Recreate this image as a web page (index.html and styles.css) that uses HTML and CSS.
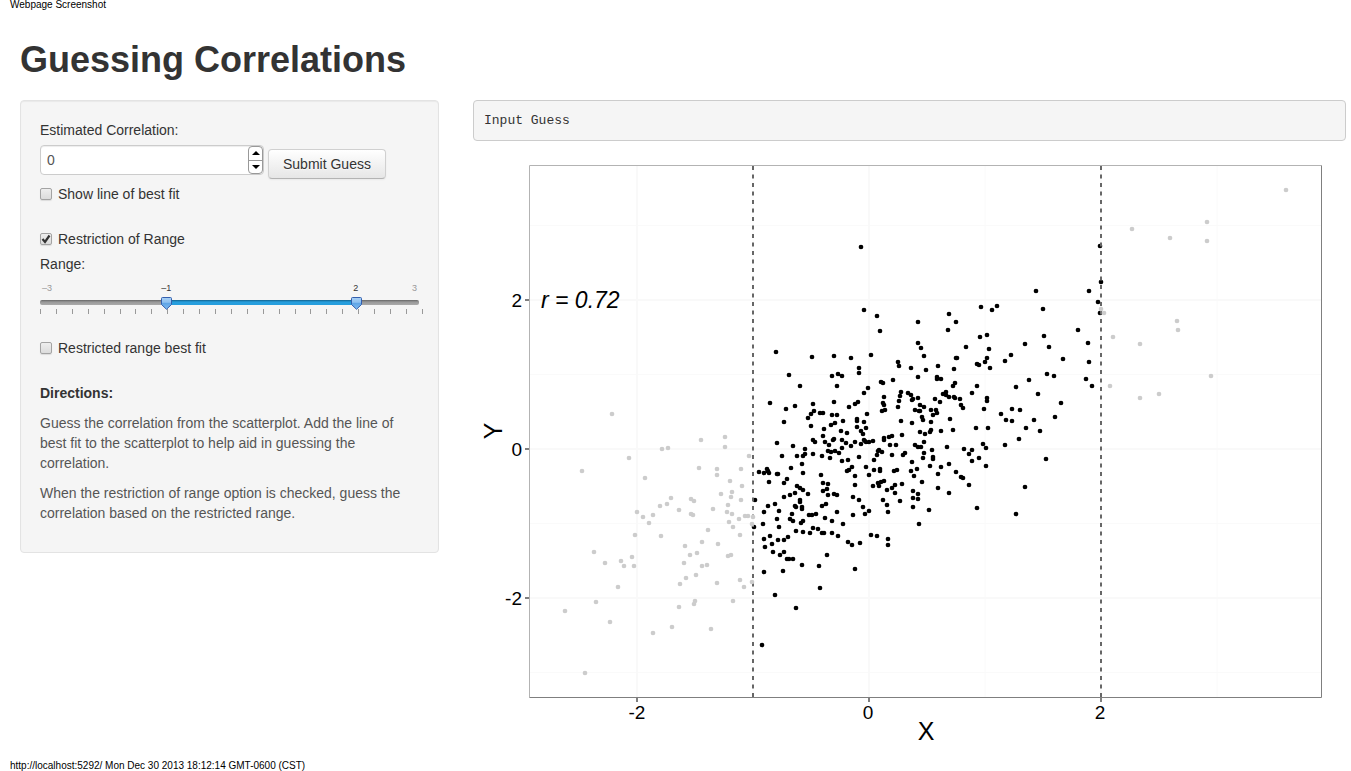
FILE: index.html
```html
<!DOCTYPE html>
<html lang="en">

<head>
  <meta charset="UTF-8">
  <meta name="viewport" content="width=device-width, initial-scale=1.0">
  <title>Guessing Correlations</title>
  <link rel="stylesheet" href="styles.css">
</head>

<body>
  <div class="print-header">Webpage Screenshot</div>

  <div class="container">
    <h1>Guessing Correlations</h1>
    <div class="row">
      <form class="well">
        <label class="field-label" for="guess">Estimated Correlation:</label>
        <div class="guess-row">
          <div class="number">
            <input type="number" id="guess" value="0" min="-1" max="1" step="0.01">
            <div class="spinner">
              <button type="button" id="up" aria-label="Increase"><i class="arrow up"></i></button>
              <button type="button" id="down" aria-label="Decrease"><i class="arrow down"></i></button>
            </div>
          </div>
          <button type="button" class="btn">Submit Guess</button>
        </div>
        <label class="checkbox"><input type="checkbox"> Show line of best fit</label>
        <label class="checkbox spaced"><input type="checkbox" checked> Restriction of Range</label>
        <label class="field-label" for="low">Range:</label>
        <div class="slider">
          <div class="scale">
            <span class="end">–3</span>
            <span class="end">3</span>
            <span class="value" id="lowText">–1</span>
            <span class="value" id="highText">2</span>
          </div>
          <div class="track">
            <div class="fill" id="fill"></div>
            <input type="range" id="low" min="-3" max="3" step="0.25" value="-1" aria-label="Range minimum">
            <input type="range" id="high" min="-3" max="3" step="0.25" value="2" aria-label="Range maximum">
          </div>
          <div class="ticks" id="ticks"></div>
        </div>
        <label class="checkbox"><input type="checkbox"> Restricted range best fit</label>
        <div class="help">
          <p><strong>Directions:</strong></p>
          <p>Guess the correlation from the scatterplot. Add the line of best fit to the scatterplot to help aid in guessing the correlation.</p>
          <p>When the restriction of range option is checked, guess the correlation based on the restricted range.</p>
        </div>
      </form>

      <div class="main">
        <pre>Input Guess</pre>
        <svg class="plot" viewBox="473 151 873 600" role="img" aria-label="Scatterplot of Y against X">
          <g class="grid-minor">
            <path d="M530 225.500H1321M530 374.500H1321M530 523.500H1321M530 672.500H1321M753 166V697M985 166V697M1217 166V697" />
          </g>
          <g class="grid-major">
            <path d="M530 300H1321M530 449H1321M530 598H1321M637 166V697M869 166V697M1101 166V697" />
          </g>
          <path class="dots inside" id="inside" />
          <path class="limit" d="M753 166V697M1101 166V697" />
          <path class="dots outside" id="outside" />
          <path class="frame light" d="M529.500 697.500V165.500H1321.500" />
          <path class="frame" d="M529.500 697.500H1321.500V165.500" />
          <path class="axis-ticks" d="M525 300H529M525 449H529M525 598H529M637 698V702M869 698V702M1101 698V702" />
          <g class="axis-text">
            <text x="522" y="307" text-anchor="end">2</text>
            <text x="522" y="456" text-anchor="end">0</text>
            <text x="522" y="605" text-anchor="end">-2</text>
            <text x="637" y="719" text-anchor="middle">-2</text>
            <text x="868" y="719" text-anchor="middle">0</text>
            <text x="1100" y="719" text-anchor="middle">2</text>
          </g>
          <g class="axis-title">
            <text x="926" y="740" text-anchor="middle">X</text>
            <text transform="translate(502 431) rotate(-90)" text-anchor="middle">Y</text>
          </g>
          <text class="r-value" x="541" y="308">r = 0.72</text>
        </svg>
      </div>
    </div>
  </div>

  <div class="print-footer">http://localhost:5292/ Mon Dec 30 2013 18:12:14 GMT-0600 (CST)</div>
  <script src="script.js"></script>
</body>

</html>
```
FILE: styles.css
```css
* {
  box-sizing: border-box;
}

body {
  margin: 0;
  background: #fff;
  color: #333;
  font-family: "Liberation Sans", Arial, sans-serif;
  font-size: 14px;
  line-height: 20px;
}

.print-header,
.print-footer {
  padding: 0 10px;
  color: #000;
  font-size: 10px;
  line-height: 10px;
}

.print-footer {
  padding-top: 10px;
}

.container {
  padding: 0 5px 0 20px;
}

h1 {
  margin: 30px 0 20px;
  font-size: 36px;
  line-height: 40px;
}

.row {
  display: grid;
  grid-template-columns: 419fr 873fr;
  gap: 34px;
  align-items: start;
}

/* sidebar */
.well {
  padding: 19px;
  border: 1px solid #e3e3e3;
  border-radius: 4px;
  background: #f5f5f5;
  box-shadow: inset 0 1px 1px rgba(0, 0, 0, 0.05);
}

.field-label {
  display: block;
}

.guess-row {
  display: flex;
  align-items: flex-start;
  gap: 4px;
  margin: 5px 0;
}

.number {
  display: flex;
  width: 224px;
  height: 30px;
  border: 1px solid #ccc;
  border-radius: 4px;
  background: #fff;
  box-shadow: inset 0 1px 1px rgba(0, 0, 0, 0.075);
}

.number input {
  flex: 1;
  min-width: 0;
  padding: 4px 6px;
  border: none;
  outline: none;
  background: none;
  color: #555;
  font: inherit;
  appearance: textfield;
}

.number input::-webkit-inner-spin-button {
  appearance: none;
}

.spinner {
  display: flex;
  flex-direction: column;
  width: 15px;
  border: 1px solid #999;
  border-radius: 4px;
}

.spinner button {
  display: flex;
  flex: 1;
  align-items: center;
  justify-content: center;
  padding: 0;
  border: none;
  background: none;
}

.spinner button + button {
  border-top: 1px solid #999;
}

.arrow {
  border: 4px solid transparent;
}

.arrow.up {
  border-top: none;
  border-bottom-color: #000;
}

.arrow.down {
  border-bottom: none;
  border-top-color: #000;
}

.btn {
  height: 30px;
  margin-top: 4px;
  padding: 4px 14px;
  border: 1px solid #ccc;
  border-color: #d0d0d0 #d0d0d0 #b3b3b3;
  border-radius: 4px;
  background: linear-gradient(#fff, #e6e6e6);
  box-shadow: 0 1px 2px rgba(0, 0, 0, 0.05);
  color: #333;
  font: inherit;
  text-shadow: 0 1px 1px rgba(255, 255, 255, 0.75);
}

.checkbox {
  display: flex;
  align-items: center;
  gap: 6px;
}

.checkbox.spaced {
  margin: 25px 0 5px;
}

.checkbox input {
  width: 12px;
  height: 12px;
  margin: 0;
  border: 1px solid #a3a3a3;
  border-radius: 2px;
  background: linear-gradient(#eee, #dcdcdc);
  box-shadow: 0 1px 1px rgba(0, 0, 0, 0.1);
  appearance: none;
}

.checkbox input:checked {
  background: url("data:image/svg+xml,%3Csvg xmlns='http://www.w3.org/2000/svg' viewBox='0 0 10 10'%3E%3Cpath d='M1.500 5L4 8L8.500 1.500' fill='none' stroke='%23333' stroke-width='2.200'/%3E%3C/svg%3E") center / 10px, linear-gradient(#eee, #dcdcdc);
}

/* range slider */
.slider {
  height: 64px;
  padding-top: 8px;
}

.scale {
  position: relative;
  display: flex;
  justify-content: space-between;
  height: 12px;
  padding: 0 2px;
  font-size: 9px;
  line-height: 12px;
}

.scale .end {
  color: #999;
}

.scale .value {
  position: absolute;
  transform: translateX(-50%);
}

.track {
  position: relative;
  height: 5px;
  margin-top: 6px;
  border-radius: 2px;
  background: linear-gradient(#666, #999 40%, #aaa);
}

.fill {
  position: absolute;
  height: 5px;
  background: linear-gradient(#11618d, #269edd 40%, #269edd);
}

.track input {
  position: absolute;
  top: -3px;
  left: -5px;
  width: calc(100% + 11px);
  height: 13px;
  margin: 0;
  background: none;
  pointer-events: none;
  appearance: none;
}

.track input::-webkit-slider-thumb {
  width: 11px;
  height: 13px;
  background: url("data:image/svg+xml,%3Csvg xmlns='http://www.w3.org/2000/svg' viewBox='0 0 11 13'%3E%3ClinearGradient id='g' x2='0' y2='1'%3E%3Cstop stop-color='%23a9d0f5'/%3E%3Cstop offset='.4' stop-color='%238fc1f0'/%3E%3Cstop offset='.5' stop-color='%2360a5e6'/%3E%3Cstop offset='1' stop-color='%2380bbf0'/%3E%3C/linearGradient%3E%3Cpath d='M.5 1.500Q.5.5 1.500.5H9.500Q10.500.5 10.500 1.500V7.500L5.500 12.300L.5 7.500Z' fill='url(%23g)' stroke='%23345fae'/%3E%3C/svg%3E") no-repeat;
  pointer-events: auto;
  appearance: none;
}

.ticks {
  display: flex;
  justify-content: space-between;
  margin: 4px -4px 0 0;
}

.ticks i {
  width: 1px;
  height: 5px;
  background: #999;
}

.help {
  margin-top: 25px;
  color: #555;
}

.help p {
  margin: 0 0 10px;
}

.help strong {
  color: #333;
}

/* output */
pre {
  margin: 0 0 10px;
  padding: 10px 10px 9px;
  border: 1px solid #ccc;
  border-radius: 4px;
  background: #f5f5f5;
  color: #333;
  font-family: "Liberation Mono", "Courier New", monospace;
  font-size: 13px;
  line-height: 20px;
}

.plot {
  display: block;
  width: 100%;
  height: auto;
}

.plot path {
  fill: none;
}

.grid-minor {
  stroke: #fafafa;
  stroke-width: 1;
}

.grid-major {
  stroke: #f9f9f9;
  stroke-width: 2;
}

.frame {
  stroke: #7f7f7f;
}

.frame.light {
  stroke: #b3b3b3;
}

.axis-ticks {
  stroke: #7f7f7f;
  stroke-width: 2;
}

.limit {
  stroke: #666;
  stroke-width: 2;
  stroke-dasharray: 4 4.500;
}

.dots {
  stroke-width: 4.700;
  stroke-linecap: round;
}

.plot .inside {
  stroke: #000;
}

.plot .outside {
  stroke: #ccc;
}

.axis-text {
  fill: #000;
  font-size: 19px;
}

.axis-title {
  fill: #000;
  font-size: 25px;
}

.r-value {
  fill: #000;
  font-size: 23px;
  font-style: italic;
}
```
FILE: script.js
```js
// points outside the restricted range, x,y on the plot canvas
const outside = `
612,414 662,449 668,448 701,440 725,437 725,447 629,458 582,471 699,468 717,469 717,475 741,469 749,456 645,478
730,481 742,486 732,492 721,494 731,497 741,500 671,498 667,504 660,506 691,499 694,501 679,510 653,515 637,512
643,517 649,523 691,514 693,515 713,509 728,505 727,512 732,514 739,519 745,516 748,516 753,517 752,524 729,522
733,527 740,535 708,530 702,542 718,544 661,536 635,535 685,546 697,553 690,555 728,556 731,555 684,563 702,566
707,565 696,575 686,578 680,584 717,583 740,580 744,587 752,582 733,601 695,601 694,604 679,607 594,552 605,563
621,561 624,566 632,557 634,566 618,587 596,602 565,611 610,622 672,627 653,633 711,629 585,673
1286,190 1207,222 1132,229 1170,238 1207,241 1101,309 1104,313 1177,321 1178,330 1113,337 1140,344 1211,376
1110,386 1159,394 1140,398`;

// points inside the restricted range
const inside = `
1100,246 1101,282 1098,302 1100,313 861,247 864,310 877,316 880,331 776,352 812,357 834,356 851,358 871,355
859,368 859,373 789,375 832,376 838,374 842,376 837,386 800,386 868,388 864,393 770,403 786,409 795,406
813,404 834,402 858,402 855,404 849,407 814,411 811,414 808,418 820,413 823,413 832,415 837,415 867,414 843,421
857,419 857,421 864,422 784,422 835,423 831,425 811,426 824,429 857,427 866,428 841,431 861,431 847,433 863,434
823,436 813,440 815,442 834,439 833,440 825,442 829,445 842,440 842,448 846,443 851,446 855,442 861,444 864,440
865,441 866,442 869,442 873,441 777,443 793,446 805,449 805,454 813,454 828,451 831,452 835,451 839,453 822,456
830,458 859,457 782,456 797,456 803,456 802,464 803,473 791,468 767,469 764,473 768,471 769,473 759,472 769,482
777,474 778,474 787,479 784,483 821,475 842,461 848,460 852,467 849,470 847,471 866,467 869,475 855,476 855,485
874,460 878,451 877,455 874,470 880,469 880,471 878,483 873,486 879,486 823,483 828,484 797,486 800,488 803,490
808,494 795,493 790,495 784,497 827,489 823,491 828,495 834,494 837,495 853,497 859,500 755,500 775,504 768,506
800,500 800,502 795,506 796,507 802,507 802,509 826,504 822,506 863,507 869,511 865,514 853,515 764,512 779,511
792,514 809,515 812,515 816,514 837,512 825,518 832,521 843,524 777,519 790,519 793,521 803,521 801,523 763,524
754,527 779,527 813,528 818,529 796,531 803,532 810,533 824,533 822,533 832,533 838,536 871,535 877,536
764,539 770,536 778,540 784,540 788,537 765,547 772,544 773,552 780,555 784,552 787,559 789,559 793,559 802,565
819,566 827,555 848,542 852,545 860,543 764,572 783,571 855,569 820,588 775,595 796,608 762,645
918,322 949,314 956,322 948,330 981,307 997,306 992,310 980,337 987,335 966,347 918,343 921,348 924,356 989,349
898,362 899,366 911,368 926,370 938,366 954,369 956,358 957,358 987,358 985,362 977,364 979,365 990,368 918,377
893,380 881,382 883,383 937,377 937,379 941,379 955,383 953,386 977,386 972,393 901,392 900,396 884,397 899,401
898,407 908,393 911,395 913,399 912,400 918,398 920,405 924,407 935,399 940,402 943,394 946,392 946,395 949,397
954,397 955,398 960,399 961,405 963,408 987,398 987,401 984,409 883,403 884,405 882,411 885,410 915,410 919,411
920,411 931,410 936,410 937,413 933,415 922,417 923,420 950,419 901,421 912,423 931,422 902,435 976,428 988,428
953,430 941,431 931,430 930,432 925,434 920,432 892,436 889,437 884,438 884,440 890,445 896,445 915,445 918,447
921,447 924,442 932,450 947,447 964,449 972,450 969,454 983,444 986,448 979,458 972,461 986,466 879,450 882,452
892,455 905,453 903,455 924,453 923,458 933,457 933,459 912,462 930,466 949,464 941,467 956,472 938,474 917,469
911,471 914,476 897,470 894,471 961,477 963,478 969,485 922,482 884,481 881,482 902,484 895,485 892,488 887,490
895,493 938,488 949,493 913,491 918,494 913,498 918,499 883,500 900,501 887,505 888,512 913,507 929,510 977,508
919,524 888,539 888,545 1036,291 1089,291 1043,309 1078,330 1088,343 1089,362 1086,379 1092,386 1044,336
1049,347 1025,344 1011,355 1005,361 1063,359 1047,374 1054,376 1029,380 1016,387 1038,394 1061,403 1055,417
1012,409 1020,410 1001,414 1006,420 1012,421 1034,420 1026,428 1040,431 1019,439 1005,445 1046,459 1025,487
1016,514`;

// every point is a zero length line with a round cap
function drawPoints(id, points) {
  const d = points.trim().split(/\s+/).map(p => 'M' + p + 'h0').join('');
  document.getElementById(id).setAttribute('d', d);
}
drawPoints('inside', inside);
drawPoints('outside', outside);

// slider
const low = document.querySelector('#low');
const high = document.querySelector('#high');
const fill = document.querySelector('#fill');

function place(input, text) {
  const percent = (input.value - input.min) / (input.max - input.min) * 100;
  text.style.left = percent + '%';
  text.textContent = input.value.replace('-', '–');
  return percent;
}

function updateSlider() {
  const from = place(low, document.querySelector('#lowText'));
  const to = place(high, document.querySelector('#highText'));
  fill.style.left = from + '%';
  fill.style.width = (to - from) + '%';
}
low.addEventListener('input', updateSlider);
high.addEventListener('input', updateSlider);
updateSlider();

document.querySelector('#ticks').innerHTML = '<i></i>'.repeat(25);

// number field
const guess = document.querySelector('#guess');
document.querySelector('#up').addEventListener('click', () => guess.stepUp());
document.querySelector('#down').addEventListener('click', () => guess.stepDown());
```
